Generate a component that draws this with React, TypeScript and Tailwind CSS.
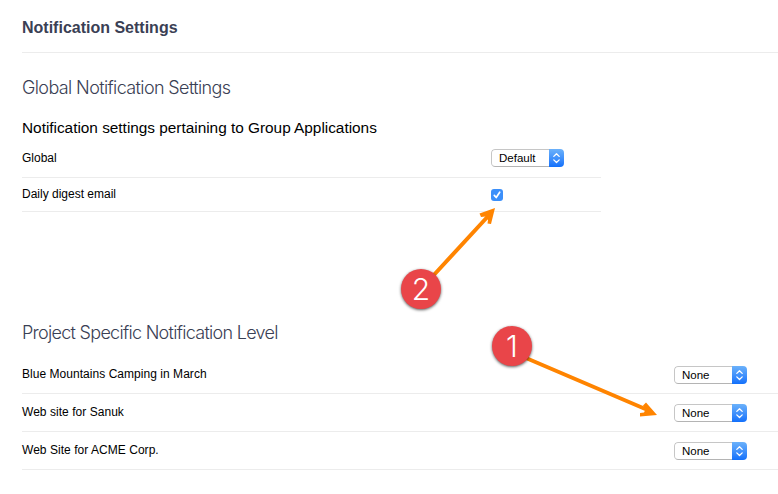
import React from 'react';

const projects = ['Blue Mountains Camping in March', 'Web site for Sanuk', 'Web Site for ACME Corp.'];

const Select: React.FC<{ value: string }> = ({ value }) => (
    <button type="button" className="flex h-[18px] w-[73px] overflow-hidden rounded-[4px] bg-white text-left text-[11.5px] leading-[17px] text-black">
        <span className="h-full flex-1 rounded-l-[4px] border border-r-0 border-[#c6c6c6] border-b-[#b4b4b4] pl-[7px] leading-[17px]">{value}</span>
        <span className="flex h-full w-[15px] items-center justify-center bg-gradient-to-b from-[#6bb1fa] to-[#1170fb]">
            <svg width="15" height="18" viewBox="0 0 15 18" fill="none" stroke="white" strokeWidth="1.3" strokeLinecap="round" strokeLinejoin="round">
                <path d="M4.8 7.4 7.5 4.8 10.2 7.4M4.8 10.9 7.5 13.5 10.2 10.9" />
            </svg>
        </span>
    </button>
);

const Badge: React.FC<{ label: string; className: string }> = ({ label, className }) => (
    <div className={`absolute flex size-10 items-center justify-center rounded-full bg-[#e94549] pb-px font-['Inter','Liberation_Sans',sans-serif] text-[30px] leading-none font-light text-white shadow-[0_1px_3px_rgba(0,0,0,0.65)] ${className}`}>
        {label}
    </div>
);

const Heading: React.FC<{ className: string; children: string }> = ({ className, children }) => (
    <h2 className={`pt-px font-['Inter','Liberation_Sans',sans-serif] text-[18px] leading-7 font-light text-[#3a4054] ${className}`}>{children}</h2>
);

const App: React.FC = () => {
    return (
        <div className="relative h-[494px] w-full overflow-hidden bg-white pl-[22px] font-['Liberation_Sans',Arial,sans-serif] text-xs text-black">
            <header className="flex h-[53px] items-center border-b border-[#ececec] pt-[4px]">
                <h1 className="text-base font-bold text-[#3a4054]">Notification Settings</h1>
            </header>

            {/* Global settings */}
            <section className="h-[250px] w-[579px] pt-5">
                <Heading className="tracking-[-0.62px]">Global Notification Settings</Heading>
                <h3 className="mt-[15px] text-[15.4px] leading-[22px] tracking-[-0.02px]">Notification settings pertaining to Group Applications</h3>
                <div className="flex h-[39px] items-center border-b border-[#ececec]">
                    <span className="w-[469px]">Global</span>
                    <Select value="Default" />
                </div>
                <div className="flex h-[34px] items-center border-b border-[#ececec]">
                    <span className="w-[469px] pb-[2px]">Daily digest email</span>
                    <span role="checkbox" aria-checked="true" className="mt-px size-3 rounded-[3px] bg-[#3b8ffa]">
                        <svg width="12" height="12" viewBox="0 0 12 12" fill="none" stroke="white" strokeWidth="1.7" strokeLinecap="round" strokeLinejoin="round">
                            <path d="M3.3 6.4 5.2 8.5 8.7 3.2" />
                        </svg>
                    </span>
                </div>
            </section>

            {/* Per-project levels */}
            <section className="pt-[15px]">
                <Heading className="tracking-[-0.71px]">Project Specific Notification Level</Heading>
                <div className="mt-[9px]">
                    {projects.map((name) => (
                        <div key={name} className="flex h-[38px] items-center border-b border-[#ececec]">
                            <span className="w-[652px] pb-[2px] tracking-[0.04px]">{name}</span>
                            <Select value="None" />
                        </div>
                    ))}
                </div>
            </section>

            {/* Callouts */}
            <svg className="pointer-events-none absolute inset-0" width="778" height="494" viewBox="0 0 778 494" fill="none" stroke="#ff8400" strokeWidth="4">
                <path d="M432 277 491 213M526 358 650 411" />
                <path d="M495 208 479.500 213.500 481 217 485.500 216.500 488 220 487.500 223.500 491 224Z" fill="#ff8400" stroke="none" />
                <path d="M657 415 646 402.500 643 405.500 645.500 409.500 644 412.500 640 413 640 416.500Z" fill="#ff8400" stroke="none" />
            </svg>
            <Badge label="2" className="left-[401px] top-[269px]" />
            <Badge label="1" className="left-[492px] top-[326px]" />
        </div>
    );
};

export default App;
